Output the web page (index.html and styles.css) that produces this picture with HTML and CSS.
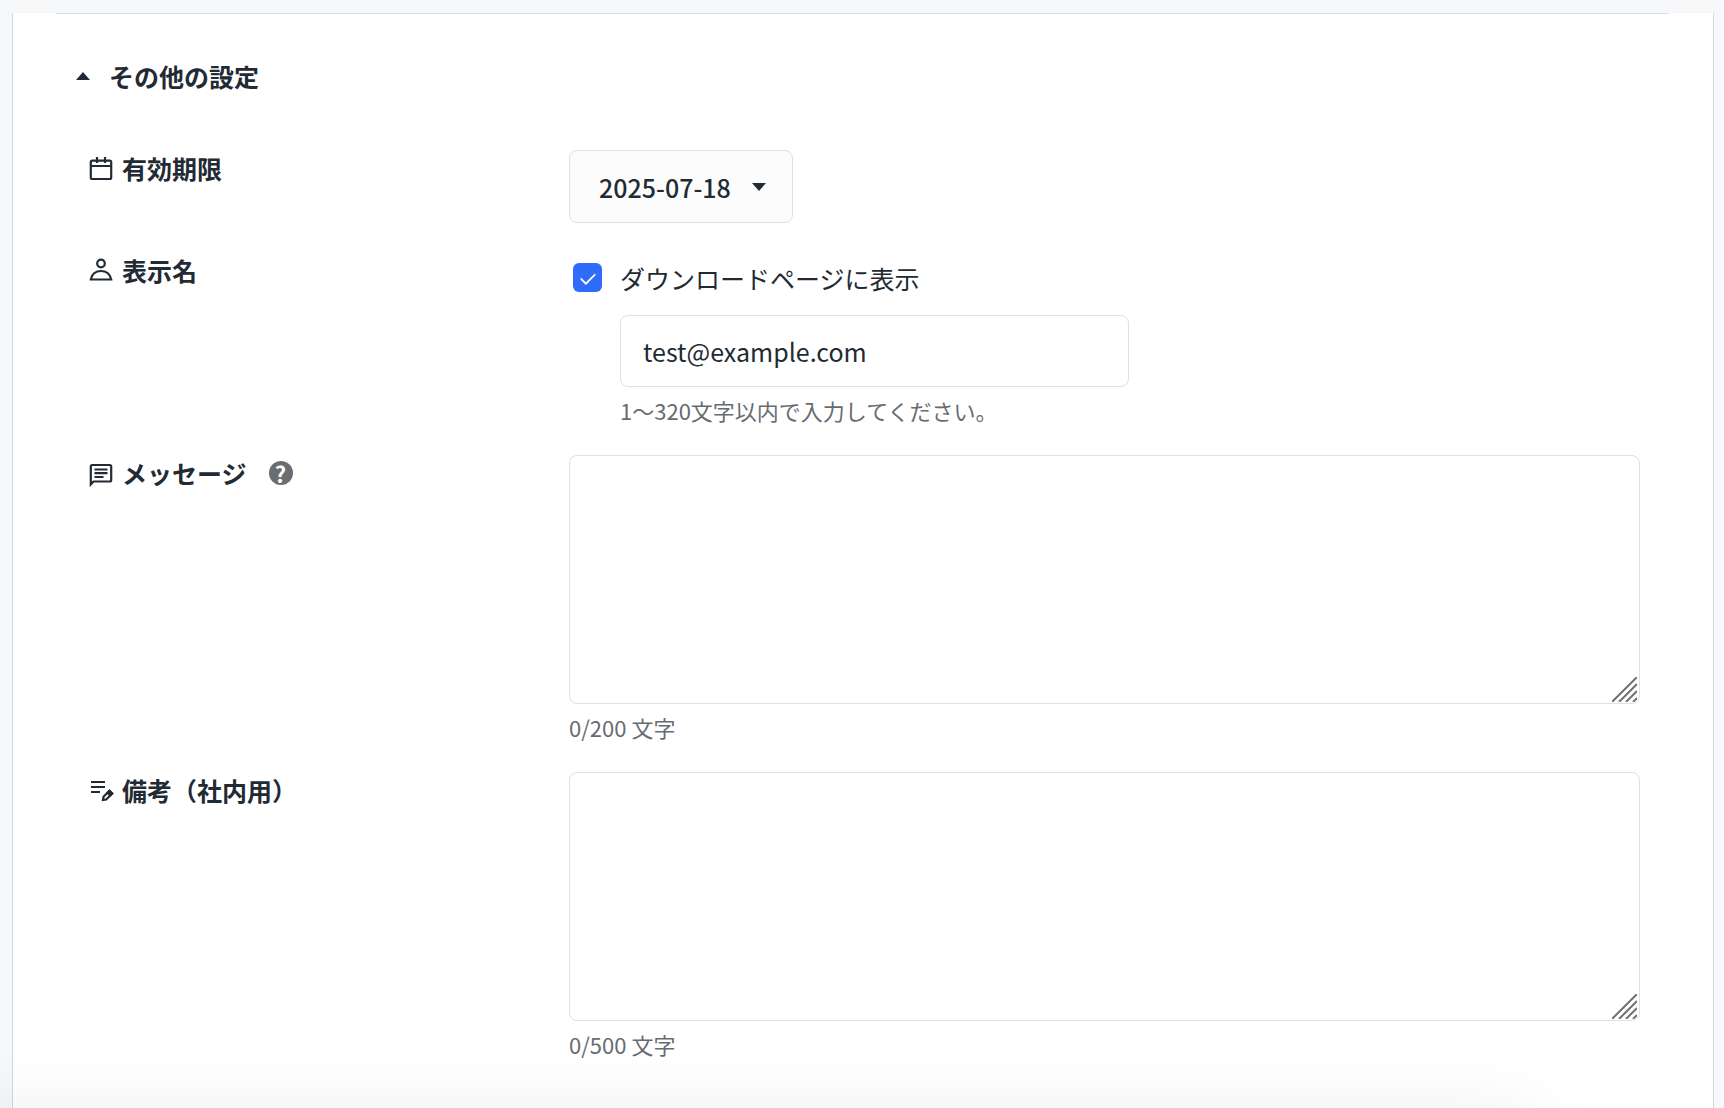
FILE: index.html
```html
<!DOCTYPE html>
<html lang="ja">
<head>
    <meta charset="UTF-8">
    <meta name="viewport" content="width=device-width, initial-scale=1.0">
    <title>その他の設定</title>
    <link rel="stylesheet" href="styles.css">
</head>
<body>
    <main class="panel">
        <hr class="divider">
        <button type="button" class="section-toggle" aria-expanded="true">
            <svg class="caret" viewBox="0 0 14 8"><path d="M0 8 7 0l7 8z"/></svg>
            その他の設定
        </button>

        <form class="settings">
            <div class="row">
                <label class="row-label" for="expiry">
                    <svg class="icon" viewBox="0 0 24 24">
                        <rect x="1.800" y="4.600" width="20.400" height="18.400" rx="1.500"/>
                        <path d="M2 10h20M8 1v6M16 1v6"/>
                    </svg>
                    有効期限
                </label>
                <div class="row-body">
                    <div class="select-wrap">
                        <select id="expiry" class="select">
                            <option>2025-07-18</option>
                        </select>
                        <svg class="caret select-caret" viewBox="0 0 14 8"><path d="M0 0h14L7 8z"/></svg>
                    </div>
                </div>
            </div>

            <div class="row">
                <label class="row-label" for="displayName">
                    <svg class="icon" viewBox="0 0 24 24">
                        <circle cx="12" cy="5.500" r="3.800"/>
                        <path d="M1.800 21.500c1-5.500 5.200-8.500 10.200-8.500s9.200 3 10.200 8.500z"/>
                    </svg>
                    表示名
                </label>
                <div class="row-body">
                    <label class="check">
                        <input type="checkbox" class="checkbox" checked>
                        ダウンロードページに表示
                    </label>
                    <div class="name-field">
                        <input type="text" id="displayName" class="text-input" value="test@example.com">
                        <p class="hint">1〜320文字以内で入力してください。</p>
                    </div>
                </div>
            </div>

            <div class="row">
                <div class="row-label">
                    <svg class="icon" viewBox="0 0 24 24">
                        <path d="M1.800 23.500V5.500Q1.800 4 3.300 4h17.400Q22.200 4 22.200 5.500v13.500Q22.200 20.500 20.700 20.500H4.500z"/>
                        <path d="M5.500 8.500h13M5.500 12.200h13M5.500 16h9"/>
                    </svg>
                    <label for="message">メッセージ</label>
                    <button type="button" class="help" aria-label="ヘルプ">?</button>
                </div>
                <div class="row-body">
                    <div class="textarea-wrap">
                        <textarea id="message" class="textarea" maxlength="200"></textarea>
                        <svg class="grip" viewBox="0 0 25 25"><path d="M0 25 25 0M7 25 25 7M14 25l11-11M21 25l4-4"/></svg>
                    </div>
                    <p class="hint">0/200 文字</p>
                </div>
            </div>

            <div class="row">
                <label class="row-label" for="note">
                    <svg class="icon" viewBox="0 0 24 24">
                        <path d="M2 4h14M2 9h14M2 14h9"/>
                        <path d="m14 22 .5-3.200 6-6 2.700 2.700-6 6z"/>
                        <path d="m18.500 14.800 2.700 2.700 2-2-2.700-2.700z" class="icon-fill"/>
                    </svg>
                    備考（社内用）
                </label>
                <div class="row-body">
                    <div class="textarea-wrap">
                        <textarea id="note" class="textarea" maxlength="500"></textarea>
                        <svg class="grip" viewBox="0 0 25 25"><path d="M0 25 25 0M7 25 25 7M14 25l11-11M21 25l4-4"/></svg>
                    </div>
                    <p class="hint">0/500 文字</p>
                </div>
            </div>
        </form>
    </main>
    <div class="bottom-shade"></div>
</body>
</html>
```
FILE: styles.css
```css
* {
    box-sizing: border-box;
}

body {
    margin: 0;
    padding: 13px 10px 0 12px;
    min-height: 100vh;
    display: flex;
    flex-direction: column;
    background: #f6f8fa;
    color: #222b33;
    font-family: "Noto Sans CJK JP", sans-serif;
    font-size: 25px;
    line-height: 36px;
}

button, input, select, textarea {
    font: inherit;
    color: inherit;
}

.panel {
    flex: 1;
    background: #fff;
    border: solid #d3d8dd;
    border-width: 0 1px;
}

.divider {
    margin: 0 44px 0 43px;
    border: 0;
    border-top: 1px solid #d9dde1;
}

/* Section heading */
.section-toggle {
    display: flex;
    align-items: center;
    gap: 19px;
    margin: 44px 63px 0;
    padding: 0;
    border: 0;
    background: none;
    font-weight: 700;
    cursor: pointer;
}

.caret {
    width: 14px;
    height: 8px;
    fill: #222b33;
}

/* Form rows */
.settings {
    display: flex;
    flex-direction: column;
    gap: 29px;
    padding: 56px 73px 28px 76px;
}

.row {
    display: flex;
    align-items: flex-start;
}

.row-label {
    display: flex;
    align-items: center;
    gap: 9px;
    flex: 0 0 480px;
    font-weight: 700;
}

.row-body {
    flex: 1;
}

.icon {
    width: 24px;
    height: 24px;
    overflow: visible;
    fill: none;
    stroke: #222b33;
    stroke-width: 2.2;
}

.icon-fill {
    fill: #222b33;
}

.help {
    width: 24px;
    height: 24px;
    margin-left: 13px;
    padding: 0;
    border: 0;
    border-radius: 50%;
    background: #6a6d71;
    color: #fff;
    font-size: 22px;
    font-weight: 700;
    line-height: 24px;
}

/* Controls */
.select-wrap, .textarea-wrap {
    position: relative;
}

.select-wrap {
    width: 224px;
}

.select {
    appearance: none;
    display: block;
    width: 100%;
    height: 73px;
    padding: 0 29px;
    border: 1px solid #dfe0e1;
    border-radius: 8px;
    background: #fcfcfc;
    font-weight: 500;
}

.select-caret {
    position: absolute;
    top: 33px;
    right: 27px;
    pointer-events: none;
}

.check {
    display: flex;
    align-items: center;
    gap: 18px;
    height: 51px;
    padding-left: 4px;
}

.checkbox {
    appearance: none;
    width: 29px;
    height: 29px;
    margin: 0;
    border-radius: 6px;
    background: #2e6cf9;
    display: grid;
    place-items: center;
}

.checkbox:checked::after {
    content: "";
    width: 7px;
    height: 13px;
    margin-bottom: 3px;
    border: solid #fff;
    border-width: 0 1px 1px 0;
    box-shadow: 1px 1px 0 -0px #fff;
    clip-path: inset(0 -1px -1px 0);
    transform: rotate(45deg);
}

.name-field {
    margin: 12px 0 0 51px;
}

.text-input {
    display: block;
    width: 509px;
    max-width: 100%;
    height: 72px;
    padding: 0 22px;
    border: 1px solid #dfe0e1;
    border-radius: 8px;
    background: #fff;
}

.textarea {
    display: block;
    width: 100%;
    height: 249px;
    padding: 16px 22px;
    border: 1px solid #dfe0e1;
    border-radius: 8px;
    background: #fff;
    resize: none;
}

.grip {
    position: absolute;
    right: 3px;
    bottom: 2px;
    width: 25px;
    height: 25px;
    fill: none;
    stroke: #717171;
    stroke-width: 2;
}

.hint {
    margin: 8px 0 0;
    color: #686c71;
    font-size: 22px;
    line-height: 31px;
}

/* Shadow of the bar docked under the page */
.bottom-shade {
    position: fixed;
    left: -100px;
    right: 190px;
    bottom: -100px;
    height: 90px;
    box-shadow: 0 0 80px rgba(0, 0, 0, 0.08);
}
```
